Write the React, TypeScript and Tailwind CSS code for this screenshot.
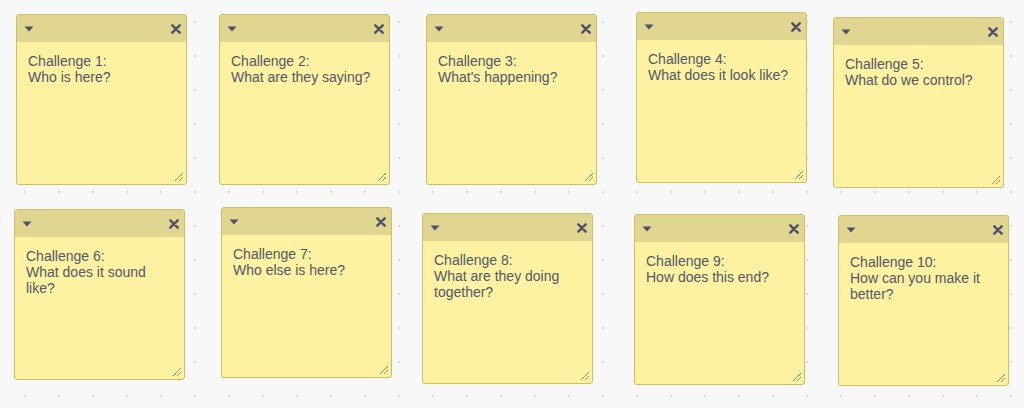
const notes = [
  { id: 1, left: 16, top: 14, lines: ["Challenge 1:", "Who is here?"] },
  { id: 2, left: 219, top: 14, lines: ["Challenge 2:", "What are they saying?"] },
  { id: 3, left: 426, top: 14, lines: ["Challenge 3:", "What's happening?"] },
  { id: 4, left: 636, top: 12, lines: ["Challenge 4:", "What does it look like?"] },
  { id: 5, left: 833, top: 17, lines: ["Challenge 5:", "What do we control?"] },
  { id: 6, left: 14, top: 209, lines: ["Challenge 6:", "What does it sound like?"] },
  { id: 7, left: 221, top: 207, lines: ["Challenge 7:", "Who else is here?"] },
  { id: 8, left: 422, top: 213, lines: ["Challenge 8:", "What are they doing together?"] },
  { id: 9, left: 634, top: 214, lines: ["Challenge 9:", "How does this end?"] },
  { id: 10, left: 838, top: 215, lines: ["Challenge 10:", "How can you make it better?"] },
];

function Caret() {
  return (
    <svg width="10" height="6" viewBox="0 0 10 6">
      <path d="M0.5 0.5 L9.5 0.5 L5 5.5 Z" fill="#4d5268" />
    </svg>
  );
}

function Close() {
  return (
    <svg width="10" height="10" viewBox="0 0 10 10">
      <path d="M1.3 1.3 L8.7 8.7 M8.7 1.3 L1.3 8.7" stroke="#4d5268" strokeWidth="2.4" strokeLinecap="round" />
    </svg>
  );
}

function Grip() {
  return (
    <svg width="10" height="10" viewBox="0 0 10 10" className="absolute right-[2px] bottom-[2px]">
      <path d="M1 9 L9 1 M5 9 L9 5" stroke="#8f8a6a" strokeWidth="0.9" />
    </svg>
  );
}

function Note({ left, top, lines }: { left: number; top: number; lines: string[] }) {
  return (
    <div
      className="absolute w-[171px] h-[171px] rounded-[3px] border border-[#cfbf5e] bg-[#fcf2a2] flex flex-col overflow-hidden"
      style={{ left, top }}
    >
      {/* Header */}
      <div className="h-[27px] shrink-0 bg-[#e0d692] flex items-center justify-between pl-[7px] pr-[5px]">
        <Caret />
        <Close />
      </div>

      {/* Body */}
      <div className="pl-[11px] pr-[10px] pt-[11px] text-[14px] leading-[16px] text-[#525769]">
        {lines.map((l) => (
          <p key={l}>{l}</p>
        ))}
      </div>
      <Grip />
    </div>
  );
}

export default function App() {
  return (
    <div
      className="relative w-[1024px] h-[408px] overflow-hidden bg-[#f8f8f8] bg-[radial-gradient(circle,#d9d9d9_0.9px,transparent_1.1px)] bg-[length:34px_34px] bg-[position:8px_5px]"
      style={{ fontFamily: '"Liberation Sans", Arial, sans-serif' }}
    >
      {notes.map((n) => (
        <Note key={n.id} left={n.left} top={n.top} lines={n.lines} />
      ))}
    </div>
  );
}
